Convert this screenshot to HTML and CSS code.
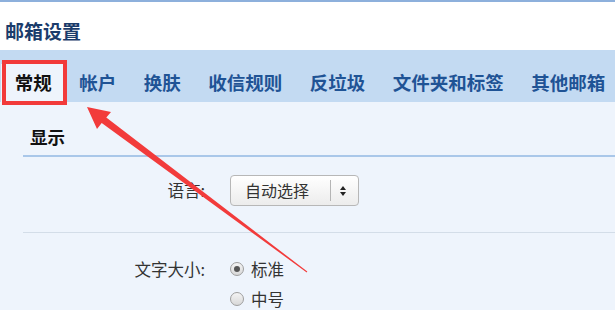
FILE: index.html
```html
<!DOCTYPE html>
<html lang="zh-CN">
<head>
<meta charset="utf-8">
<title>邮箱设置</title>
<link rel="stylesheet" href="styles.css">
</head>
<body>
<div class="page">
  <div class="topline"></div>
  <header class="title">邮箱设置</header>
  <nav class="tabs">
    <span class="tab active">常规<span class="mark"></span></span>
    <span class="tab">帐户</span>
    <span class="tab">换肤</span>
    <span class="tab">收信规则</span>
    <span class="tab">反垃圾</span>
    <span class="tab">文件夹和标签</span>
    <span class="tab">其他邮箱</span>
  </nav>
  <main class="content">
    <h2 class="section-title">显示</h2>
    <div class="row row-lang">
      <div class="label">语言:</div>
      <div class="control">
        <div class="select">
          <span class="select-text">自动选择</span>
          <span class="select-sep"></span>
          <span class="select-arrows"><span class="up"></span><span class="down"></span></span>
        </div>
      </div>
    </div>
    <div class="row row-size">
      <div class="label">文字大小:</div>
      <div class="control radios">
        <label class="radio-line"><span class="radio checked"></span>标准</label>
        <label class="radio-line"><span class="radio"></span>中号</label>
      </div>
    </div>
  </main>
  <svg class="arrow" width="615" height="310" viewBox="0 0 615 310">
    <polygon points="87,107 111,112 106.3,117.4 307.3,271.6 306.7,272.4 101.7,123 97,129" fill="#f23b3b"/>
  </svg>
</div>
</body>
</html>
```
FILE: styles.css
```css
html, body {
  margin: 0;
  padding: 0;
}
body {
  background: #eef4fc;
  font-family: "Noto Sans CJK SC", "Noto Sans", sans-serif;
  width: 615px;
  height: 310px;
  overflow: hidden;
}
.page {
  position: relative;
  width: 615px;
  height: 310px;
  overflow: hidden;
}
.topline {
  height: 2px;
  background: #8db0dc;
}
.title {
  height: 38px;
  padding: 10px 0 0 5px;
  background: #ffffff;
  font-size: 19px;
  line-height: 38px;
  font-weight: bold;
  color: #1b3c6b;
}
.tabs {
  height: 52px;
  background: #c3daf2;
  display: flex;
  align-items: flex-end;
  padding-left: 1px;
  box-sizing: border-box;
}
.tab {
  position: relative;
  height: 38px;
  line-height: 36px;
  padding: 0 13.75px;
  font-size: 18.5px;
  font-weight: bold;
  color: #1f5395;
  white-space: nowrap;
}
.tab.active {
  background: #eef4fc;
  color: #111111;
}
.mark {
  position: absolute;
  top: -4px;
  left: 1px;
  right: -1.5px;
  bottom: -3px;
  border: 4px solid #f23a3a;
}
.content {
  padding-left: 23px;
}
.section-title {
  margin: 0;
  padding: 24px 0 7px 7px;
  line-height: 22px;
  font-size: 17.5px;
  font-weight: bold;
  color: #111111;
  border-bottom: 2px solid #a9c7e9;
}
.row {
  display: flex;
  font-size: 16.5px;
  color: #333333;
}
.label {
  width: 207px;
  text-align: right;
  padding-right: 25px;
  box-sizing: border-box;
  flex: none;
}
.row-lang {
  align-items: center;
  padding: 18px 0 26px;
  border-bottom: 1px solid #d3dde8;
}
.row-lang .label {
  line-height: 31px;
}
.select {
  width: 129px;
  height: 31px;
  box-sizing: border-box;
  border: 1px solid #b7b7b7;
  border-radius: 4px;
  background: linear-gradient(#ffffff, #ececec);
  display: flex;
  align-items: center;
  padding-left: 14px;
  color: #333333;
}
.select-text {
  width: 85px;
  line-height: 29px;
  font-size: 16px;
}
.select-sep {
  width: 1px;
  height: 21px;
  background: #b5b5b5;
}
.select-arrows {
  margin-left: 9px;
  display: flex;
  flex-direction: column;
  gap: 2px;
}
.up {
  width: 0;
  height: 0;
  border-left: 3.5px solid transparent;
  border-right: 3.5px solid transparent;
  border-bottom: 4px solid #222;
}
.down {
  width: 0;
  height: 0;
  border-left: 3.5px solid transparent;
  border-right: 3.5px solid transparent;
  border-top: 4px solid #222;
}
.row-size {
  padding-top: 21px;
}
.row-size .label {
  line-height: 30px;
}
.radios {
  display: flex;
  flex-direction: column;
}
.radio-line {
  display: flex;
  align-items: center;
  height: 30px;
  line-height: 30px;
}
.radio {
  width: 14px;
  height: 14px;
  box-sizing: border-box;
  border: 1px solid #9e9e9e;
  border-radius: 50%;
  background: linear-gradient(#f4f4f4, #d8d8d8);
  margin-right: 7px;
  display: flex;
  align-items: center;
  justify-content: center;
}
.radio.checked::after {
  content: "";
  width: 6px;
  height: 6px;
  border-radius: 50%;
  background: #555555;
}
.arrow {
  position: absolute;
  top: 0;
  left: 0;
  pointer-events: none;
}
```
